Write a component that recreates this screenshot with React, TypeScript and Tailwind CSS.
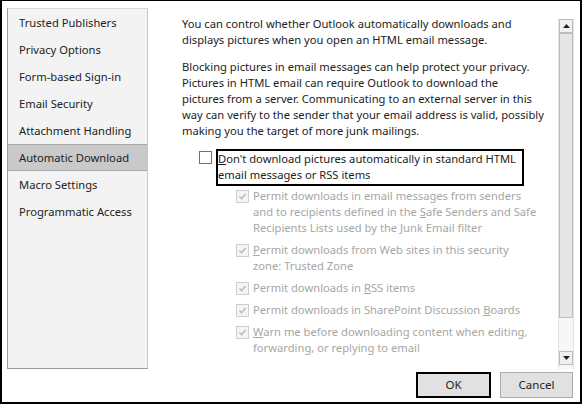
import type { ReactNode } from "react";

const navItems = [
    "Trusted Publishers",
    "Privacy Options",
    "Form-based Sign-in",
    "Email Security",
    "Attachment Handling",
    "Automatic Download",
    "Macro Settings",
    "Programmatic Access",
];

function DisabledCheck() {
    return (
        <span className="mt-[2px] flex h-[13px] w-[13px] shrink-0 items-center justify-center border border-[#cfcfcf] bg-[#f4f4f4]">
            <svg width="9" height="9" viewBox="0 0 9 9">
                <path d="M1.5 4.5 L3.6 6.6 L7.6 2" fill="none" stroke="#b8b8b8" strokeWidth="1.4" />
            </svg>
        </span>
    );
}

function SubOption({ children }: { children: ReactNode }) {
    return (
        <div className="flex gap-[4px]">
            <DisabledCheck />
            <p className="whitespace-nowrap text-[#a6a6a6]">{children}</p>
        </div>
    );
}

function Arrow({ up }: { up?: boolean }) {
    return (
        <div className="flex h-[14px] w-[14px] items-center justify-center border border-[#bdbdbd] bg-[#f0f0f0]">
            <svg width="7" height="4" viewBox="0 0 7 4">
                <path d={up ? "M0 4 L3.5 0 L7 4 Z" : "M0 0 L3.5 4 L7 0 Z"} fill="#222" />
            </svg>
        </div>
    );
}

export default function App() {
    return (
        <div
            className="flex h-[404px] w-[582px] flex-col border-b-2 border-l-2 border-r-2 border-t border-black bg-white text-[11.2px] leading-[16px] text-[#222]"
            style={{ fontFamily: '"Noto Sans", "Open Sans", sans-serif' }}
        >
            <div className="mt-[7px] flex h-[361px]">
                {/* left nav */}
                <div className="ml-[5px] w-[141px] border border-[#9a9a9a] border-t-[#d8d8d8] border-r-[#c8c8c8] bg-[#f3f3f3]">
                    {navItems.map((n) => (
                        <div
                            key={n}
                            className={`flex h-[27px] items-center pl-[11px] ${
                                n === "Automatic Download" ? "border-y border-[#a8a8a8] bg-[#c9c9c9]" : ""
                            }`}
                        >
                            {n}
                        </div>
                    ))}
                </div>

                {/* content */}
                <div className="flex flex-1 pt-[8px]">
                    <div className="flex-1 whitespace-nowrap pl-[34px] pr-[8px]">
                        <p>
                            You can control whether Outlook automatically downloads and
                            <br />
                            displays pictures when you open an HTML email message.
                        </p>
                        <p className="mt-[11px]">
                            Blocking pictures in email messages can help protect your privacy.
                            <br />
                            Pictures in HTML email can require Outlook to download the
                            <br />
                            pictures from a server. Communicating to an external server in this
                            <br />
                            way can verify to the sender that your email address is valid, possibly
                            <br />
                            making you the target of more junk mailings.
                        </p>

                        <div className="ml-[17px] mt-[10px] flex gap-[4px]">
                            <span className="mt-[2px] h-[13px] w-[13px] shrink-0 border border-[#707070] bg-white" />
                            <p className="w-[308px] border-2 border-black pb-[1px]">
                                <span className="underline">D</span>on't download pictures automatically in standard HTML
                                <br />
                                email messages or RSS items
                            </p>
                        </div>

                        <div className="ml-[54px] mt-[2px] flex flex-col gap-[6px]">
                            <SubOption>
                                Permit downloads in email messages from senders
                                <br />
                                and to recipients defined in the <span className="underline">S</span>afe Senders and Safe
                                <br />
                                Recipients Lists used by the Junk Email filter
                            </SubOption>
                            <SubOption>
                                <span className="underline">P</span>ermit downloads from Web sites in this security
                                <br />
                                zone: Trusted Zone
                            </SubOption>
                            <SubOption>
                                Permit downloads in <span className="underline">R</span>SS items
                            </SubOption>
                            <SubOption>
                                Permit downloads in SharePoint Discussion <span className="underline">B</span>oards
                            </SubOption>
                            <SubOption>
                                <span className="underline">W</span>arn me before downloading content when editing,
                                <br />
                                forwarding, or replying to email
                            </SubOption>
                        </div>
                    </div>

                    {/* scrollbar */}
                    <div className="mr-[6px] mt-[3px] flex w-[16px] flex-col border-x border-[#e3e3e3] bg-[#f7f7f7] pb-[4px]">
                        <Arrow up />
                        <div className="h-[285px] border border-[#bdbdbd] bg-[#e6e6e6]" />
                        <div className="flex-1" />
                        <Arrow />
                    </div>
                </div>
            </div>

            {/* buttons */}
            <div className="mt-[3px] flex justify-end gap-[9px] pr-[7px] text-[11.5px]">
                <button className="h-[26px] w-[75px] border-2 border-black bg-[#e1e1e1]">OK</button>
                <button className="h-[26px] w-[73px] border border-[#adadad] bg-[#e1e1e1]">Cancel</button>
            </div>
        </div>
    );
}
